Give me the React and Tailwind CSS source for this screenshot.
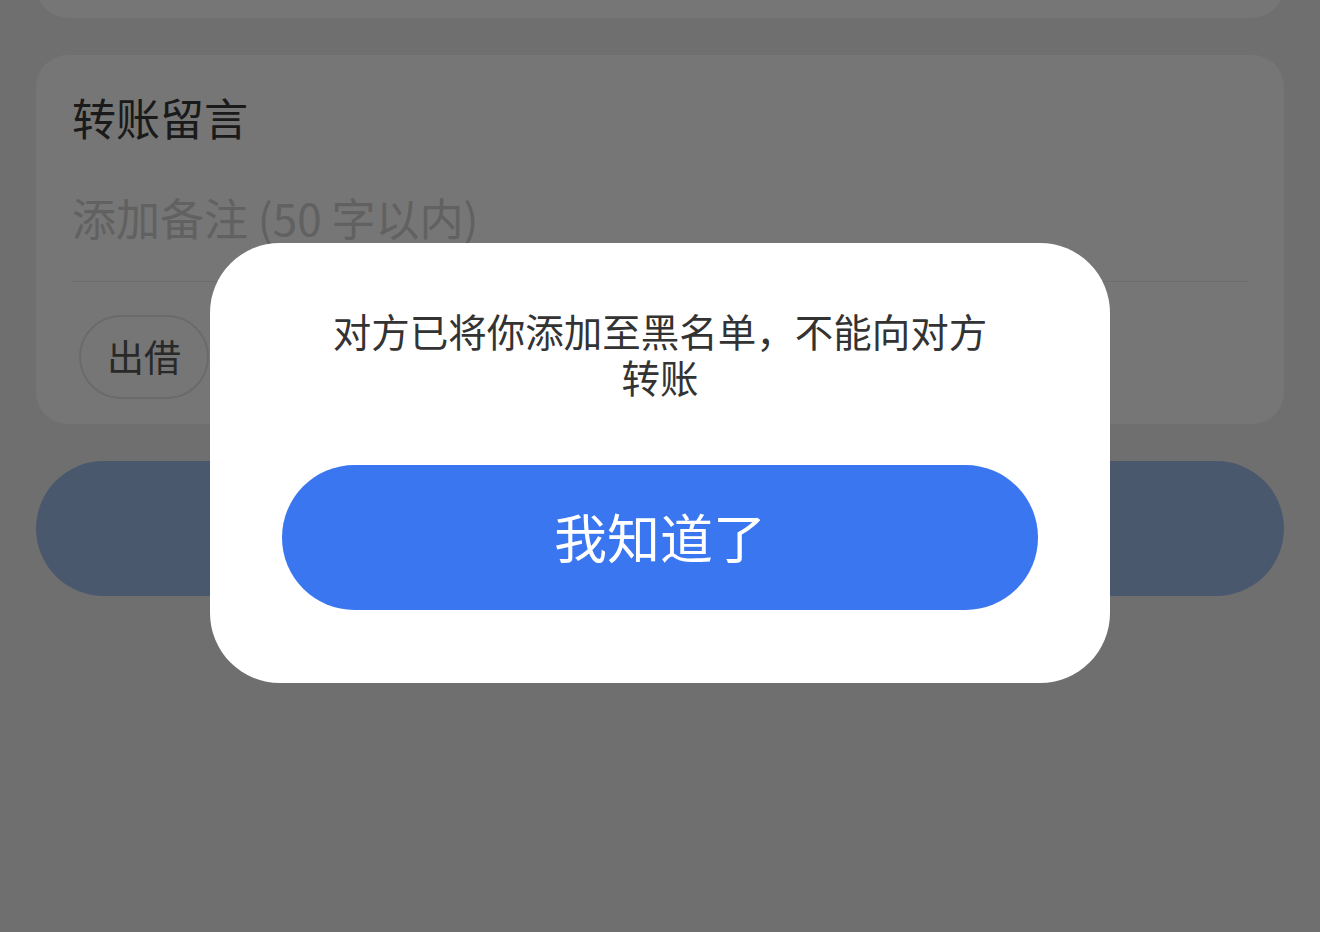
import React from "react";

const font = { fontFamily: '"Noto Sans CJK SC", "Noto Sans", sans-serif' };

export default function App() {
  return (
    <div className="relative h-[932px] w-[1320px] overflow-hidden bg-[#f0f0f0]" style={font}>
      {/* Page underneath */}
      <div className="flex flex-col px-[36px]">
        {/* previous card, scrolled off the top */}
        <div className="mt-[-100px] h-[118px] rounded-[32px] bg-white" />

        {/* 转账留言 card */}
        <div className="mt-[37px] rounded-[32px] bg-white px-[36px] pt-[32px] pb-[25px]">
          <div className="text-[44px] leading-[60px] text-[#3a3a3a]">转账留言</div>
          <div className="mt-[40px] border-b border-[#ececec] pb-[34px]">
            <div className="text-[44px] leading-[60px] text-[#d2d2d2]">添加备注 (50 字以内)</div>
          </div>
          <div className="mt-[33px] flex">
            <span className="ml-[7px] flex h-[84px] items-center rounded-full border-2 border-[#e6e6e6] px-[26px] text-[37px] text-[#5a5a5a]">
              出借
            </span>
          </div>
        </div>

        {/* disabled submit */}
        <div className="mt-[37px] h-[135px] rounded-full bg-[#a0beee]" />
      </div>

      {/* Mask + dialog */}
      <div className="absolute inset-0 flex justify-center bg-[rgba(0,0,0,0.537)] pt-[243px]">
        <div className="h-fit w-[900px] rounded-[70px] bg-white px-[72px] pt-[64px] pb-[73px]">
          <p className="mx-auto w-[670px] text-center text-[38.5px] leading-[46px] text-[#333333]">
            对方已将你添加至黑名单，不能向对方转账
          </p>
          <button className="mt-[66px] flex h-[145px] w-full items-center justify-center rounded-full bg-[#3a76f0] text-[53px] text-white">
            <span className="-mt-[2px]">我知道了</span>
          </button>
        </div>
      </div>
    </div>
  );
}
